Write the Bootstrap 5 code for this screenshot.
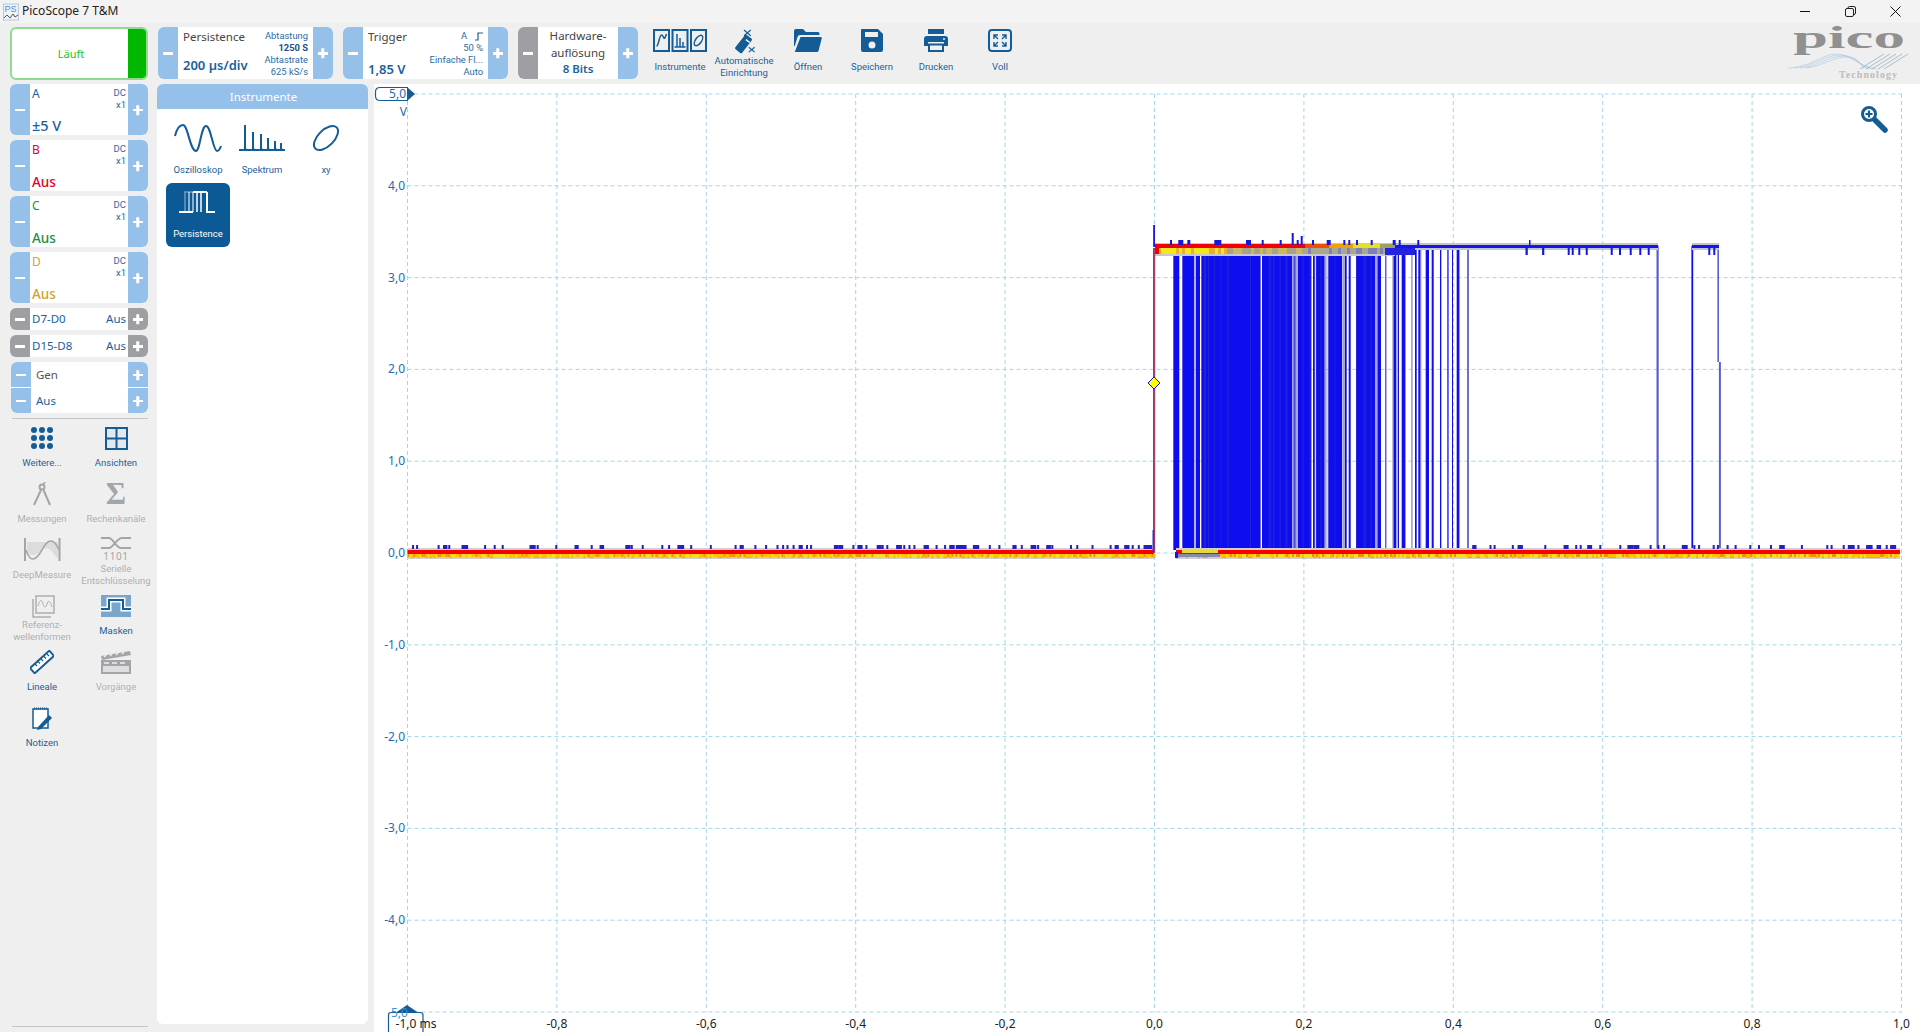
<!DOCTYPE html>
<html lang="de">
<head>
<meta charset="UTF-8">
<title>PicoScope 7 T&amp;M</title>
<link rel="stylesheet" href="https://cdn.jsdelivr.net/npm/bootstrap@5.3.0/dist/css/bootstrap.min.css">
<style>
html, body { height: 100%; overflow: hidden; }
body { background: #efefef; font-family: "Noto Sans", "Open Sans", sans-serif; color: #1b5f9c; font-size: 12px; line-height: 1.2; }
svg { display: block; }
.title-row { height: 23px; background: #f3f3f3; color: #222; font-size: 12px; }
.app-ico { margin: 0 3px 0 3px; }
.win-box { margin-right: 2px; }
.win-btn { width: 45px; height: 20px; }
.tool-row { height: 61px; padding-left: 10px; }
.run-box { width: 138px; height: 53px; margin-top: 4px; background: #fff; border: 2px solid #8fdc8f; border-radius: 6px; color: #22c222; font-size: 11px; overflow: hidden; }
.run-green { width: 20px; background: #00b800; margin: -2px; }
.stepper { height: 52px; margin-top: 4px; margin-left: 10px; border-radius: 6px; overflow: hidden; background: #fff; }
.stp { width: 20px; flex: none; padding: 0; border: 0; border-radius: 0; background: #94c0ea; position: relative; }
.stp.off { background: #9e9fa3; }
.stp::before, .stp.add::after { content: ""; position: absolute; left: 50%; top: 50%; width: 10px; height: 2.5px; margin: -1px 0 0 -5px; background: #fff; }
.stp.add::after { transform: rotate(90deg); }
.tb-wid { width: 135px; padding: 3px 5px 1px 5px; }
.tb-wid.narrow { width: 125px; }
.tb-name { font-size: 11.5px; color: #444; }
.tb-val { font-size: 13px; font-weight: 600; color: #1b5f9c; }
.tb-val.small-val { font-size: 11.5px; }
.tb-mini { font-family: Roboto, sans-serif; font-size: 9.4px; line-height: 12px; text-align: right; color: #2a6aa3; }
.tb-mini b { font-weight: 700; color: #174f86; }
.hw-mid { width: 80px; text-align: center; font-size: 11.5px; line-height: 16.5px; color: #444; padding-top: 1px; }
.tool-box { margin-left: 10px; }
.tool-btn { width: 64px; color: #1b5f9c; font-family: Roboto, sans-serif; font-size: 9.5px; line-height: 12px; text-align: center; }
.tool-ico { height: 25px; margin-top: 6px; }
.tool-lab { height: 25px; }
.logo-wrap { width: 124px; margin-right: 8px; }
.side-col { width: 157px; padding: 0 9px 0 10px; }
.chan { height: 51px; margin-bottom: 5px; border-radius: 6px; overflow: hidden; background: #fff; }
.chan-mid { padding: 3px 2px 1px 2px; min-width: 0; }
.chan-name { font-size: 12px; }
.chan-mini { font-family: Roboto, sans-serif; font-size: 9.5px; line-height: 12px; text-align: right; color: #2a6aa3; }
.chan-val { font-size: 13.5px; font-weight: 500; margin-top: auto; }
.chan-val.range { font-size: 14.5px; }
.col-b { color: #e4002b; }
.col-c { color: #1a9045; }
.col-d { color: #d3a32c; }
.dig { height: 22px; }
.dig .chan-mid { padding: 0 2px; font-size: 11.5px; }
.gen-box { height: 51px; margin: 0 0 5px 1px; border-radius: 6px; overflow: hidden; background: #fff; }
.gen-line { height: 25px; font-size: 11.5px; }
.gen-line + .gen-line { margin-top: 1px; }
.gen-txt { padding-left: 5px; }
.gen-name { color: #555; }
.side-rule { height: 1px; background: #c4c4c4; margin: 0 0 0 2px; flex: none; }
.side-rule.foot { margin-bottom: 5px; }
.side-tools { margin: 5px 0 0 -5px; width: 148px; }
.side-cell { height: 56px; font-family: Roboto, sans-serif; font-size: 9.5px; line-height: 12px; text-align: center; color: #1b5f9c; }
.side-cell.dim { color: #aeb0b3; }
.side-ico { height: 28px; }
.side-lab { height: 21px; }
.inst-panel { width: 211px; margin-bottom: 8px; margin-right: 6px; background: #fff; border-radius: 6px; overflow: hidden; }
.inst-head { height: 25px; background: #94c0ea; color: #fff; font-size: 11.5px; padding-left: 2px; }
.inst-grid { padding: 10px 9px; }
.inst-tile { width: 64px; height: 64px; font-family: Roboto, sans-serif; font-size: 9.5px; line-height: 12px; text-align: center; color: #1b5f9c; border-radius: 6px; }
.inst-tile.sel { background: #0b5a96; color: #fff; }
.inst-ico { height: 34px; margin-top: 4px; }
.inst-tile.sel .inst-ico { height: 30px; margin-top: 7px; }
.inst-lab { margin-top: 7px; }
.inst-tile.sel .inst-lab { margin-top: 8px; }
.chart-box { width: 1546px; background: #fff; }
.ylab { font: 12px "Noto Sans", sans-serif; fill: #1b6cb2; text-anchor: end; }
.xlab { font: 12px "Noto Sans", sans-serif; fill: #222; text-anchor: middle; }
</style>
</head>
<body class="d-flex flex-column">

<div class="title-row d-flex align-items-center flex-shrink-0">
  <svg class="app-ico" width="16" height="18" viewBox="0 0 16 18">
    <rect x="0.5" y="1" width="15" height="16" fill="#eef3f8" stroke="#b8c8d8"/>
    <text x="1.5" y="9" font-family="Liberation Sans" font-size="9" fill="#4c8fd0">PS</text>
    <path d="M1 15 L4 12 L7 15 L10 11 L12 14 L15 12" fill="none" stroke="#555" stroke-width="1"/>
  </svg>
  <span>PicoScope 7 T&amp;M</span>
  <div class="win-box ms-auto d-flex">
    <div class="win-btn d-flex align-items-center justify-content-center"><svg width="11" height="11"><path d="M0 5.5H10" stroke="#111"/></svg></div>
    <div class="win-btn d-flex align-items-center justify-content-center"><svg width="11" height="11"><rect x="0.5" y="2.5" width="8" height="8" rx="1.5" fill="none" stroke="#222"/><path d="M3 2.5V2a1.5 1.5 0 0 1 1.5-1.5H9A1.5 1.5 0 0 1 10.5 2v5A1.5 1.5 0 0 1 9 8.5" fill="none" stroke="#222"/></svg></div>
    <div class="win-btn d-flex align-items-center justify-content-center"><svg width="11" height="11"><path d="M0.5 0.5L10.5 10.5M10.5 0.5L0.5 10.5" stroke="#111"/></svg></div>
  </div>
</div>

<div class="tool-row d-flex flex-shrink-0">
  <div class="run-box d-flex">
    <div class="flex-fill d-flex align-items-center justify-content-center">Läuft</div>
    <div class="run-green"></div>
  </div>

  <div class="stepper d-flex">
    <button class="btn stp"></button>
    <div class="tb-wid d-flex justify-content-between">
      <div class="d-flex flex-column justify-content-between">
        <div class="tb-name">Persistence</div>
        <div class="tb-val pb-1">200 µs/div</div>
      </div>
      <div class="tb-mini">Abtastung<br><b>1250 S</b><br>Abtastrate<br>625 kS/s</div>
    </div>
    <button class="btn stp add"></button>
  </div>

  <div class="stepper d-flex">
    <button class="btn stp"></button>
    <div class="tb-wid narrow d-flex justify-content-between">
      <div class="d-flex flex-column justify-content-between">
        <div class="tb-name">Trigger</div>
        <div class="tb-val">1,85 V</div>
      </div>
      <div class="tb-mini">
        <div class="d-flex justify-content-end align-items-center gap-2">A <svg width="8" height="9" viewBox="0 0 8 9"><path d="M0 8H3V1H8" fill="none" stroke="#1b5f9c" stroke-width="1.2"/></svg></div>
        50 %<br>Einfache Fl...<br>Auto
      </div>
    </div>
    <button class="btn stp add"></button>
  </div>

  <div class="stepper d-flex">
    <button class="btn stp off"></button>
    <div class="hw-mid">Hardware-<br>auflösung<br><span class="tb-val small-val">8 Bits</span></div>
    <button class="btn stp add"></button>
  </div>

  <div class="tool-box d-flex">
    <div class="tool-btn">
      <div class="tool-ico d-flex align-items-start justify-content-center"><svg width="54" height="23" viewBox="0 0 54 23" fill="none" stroke="#135c96">
        <rect x="1" y="1" width="15" height="21" stroke-width="2"/><rect x="19.5" y="1" width="15" height="21" stroke-width="2"/><rect x="38" y="1" width="15" height="21" stroke-width="2"/>
        <path d="M3.5 17C6 17 6 6 8.5 6C11 6 10.5 14 13.5 5" stroke-width="1.5"/>
        <path d="M21.5 18H32.5M24 18V5M27 18V9M30 18V13" stroke-width="1.5"/>
        <ellipse cx="45.5" cy="11.5" rx="6" ry="3" transform="rotate(-55 45.5 11.5)" stroke-width="1.5"/>
      </svg></div>
      <div class="tool-lab d-flex align-items-center justify-content-center">Instrumente</div>
    </div>
    <div class="tool-btn">
      <div class="tool-ico d-flex align-items-start justify-content-center"><svg width="24" height="25" viewBox="0 0 24 26">
        <rect x="7" y="6" width="9" height="19" rx="1.5" transform="rotate(38 11.5 15.5)" fill="#135c96"/>
        <path d="M14 11L18 14" stroke="#fff" stroke-width="1.5"/>
        <path d="M12 1L19 7M19 1L12 7M17 19L23 24M23 19L17 24" stroke="#135c96" stroke-width="1.2"/>
      </svg></div>
      <div class="tool-lab d-flex align-items-center justify-content-center">Automatische<br>Einrichtung</div>
    </div>
    <div class="tool-btn">
      <div class="tool-ico d-flex align-items-start justify-content-center"><svg width="28" height="24" viewBox="0 0 28 24" fill="#135c96">
        <path d="M0 2Q0 0 2 0H9L12 3H24Q25.5 3 25.5 5V6H6Q4 6 3.5 8L0.8 17H0Z"/>
        <path d="M6.5 8H27Q28 8 27.7 9.5L24.5 22Q24 23 23 23H0.8Z"/>
      </svg></div>
      <div class="tool-lab d-flex align-items-center justify-content-center">Öffnen</div>
    </div>
    <div class="tool-btn">
      <div class="tool-ico d-flex align-items-start justify-content-center"><svg width="22" height="23" viewBox="0 0 22 23" fill="#135c96">
        <path fill-rule="evenodd" d="M1 0H17L22 5V21Q22 23 20 23H2Q0 23 0 21V1Q0 0 1 0ZM4 3V8H17V3ZM11 12.5A3.5 3.5 0 1 0 11 19.5A3.5 3.5 0 1 0 11 12.5Z"/>
      </svg></div>
      <div class="tool-lab d-flex align-items-center justify-content-center">Speichern</div>
    </div>
    <div class="tool-btn">
      <div class="tool-ico d-flex align-items-start justify-content-center"><svg width="24" height="23" viewBox="0 0 24 23" fill="#135c96">
        <rect x="4" y="0" width="16" height="5"/>
        <path fill-rule="evenodd" d="M3 7H21Q24 7 24 10V17H20V13H4V17H0V10Q0 7 3 7ZM20 9A1 1 0 1 0 20 11A1 1 0 1 0 20 9Z"/>
        <path fill-rule="evenodd" d="M4 14.5H20V23H4ZM6 16.5V21H18V16.5Z"/>
      </svg></div>
      <div class="tool-lab d-flex align-items-center justify-content-center">Drucken</div>
    </div>
    <div class="tool-btn">
      <div class="tool-ico d-flex align-items-start justify-content-center"><svg width="24" height="23" viewBox="0 0 24 23" fill="none" stroke="#135c96">
        <rect x="1" y="1" width="22" height="21" rx="3" stroke-width="2"/>
        <path d="M6 10V6H10M6 6L10 10M14 6H18V10M18 6L14 10M6 13V17H10M6 17L10 13M14 17H18V13M18 17L14 13" stroke-width="1.4"/>
      </svg></div>
      <div class="tool-lab d-flex align-items-center justify-content-center">Voll</div>
    </div>
  </div>

  <div class="logo-wrap ms-auto">
    <svg width="124" height="61" viewBox="0 0 124 61">
      <text x="5" y="25" font-family="Liberation Serif" font-size="31" font-weight="700" fill="#909090" textLength="112" lengthAdjust="spacingAndGlyphs">pico</text>
      <g fill="none" stroke="#a8c6e4" stroke-width=".6">
        <path d="M0 45C24 44 34 31 48 31C62 31 72 44 88 46"/><path d="M6 45C28 43 36 32 52 32C66 32 74 44 84 46"/><path d="M12 45C32 43 40 33 56 33C68 33 74 44 80 46"/><path d="M18 45C36 43 44 34 60 34C70 34 74 44 76 46"/>
      </g>
      <g fill="none" stroke="#7d97b3" stroke-width=".6">
        <path d="M72 46L96 31M78 46L102 31M84 46L108 31M90 46L114 31M96 46L120 31"/>
      </g>
      <text x="51" y="55" font-family="Liberation Serif" font-size="10" font-weight="700" fill="#bdbdbd" textLength="58">Technology</text>
    </svg>
  </div>
</div>

<div class="d-flex flex-fill" style="min-height:0">
  <div class="side-col d-flex flex-column flex-shrink-0">
    <div class="chan d-flex">
      <button class="btn stp"></button>
      <div class="chan-mid flex-fill d-flex flex-column">
        <div class="d-flex justify-content-between"><span class="chan-name">A</span><span class="chan-mini">DC<br>x1</span></div>
        <div class="chan-val range">±5 V</div>
      </div>
      <button class="btn stp add"></button>
    </div>
    <div class="chan d-flex">
      <button class="btn stp"></button>
      <div class="chan-mid flex-fill d-flex flex-column">
        <div class="d-flex justify-content-between"><span class="chan-name col-b">B</span><span class="chan-mini">DC<br>x1</span></div>
        <div class="chan-val col-b">Aus</div>
      </div>
      <button class="btn stp add"></button>
    </div>
    <div class="chan d-flex">
      <button class="btn stp"></button>
      <div class="chan-mid flex-fill d-flex flex-column">
        <div class="d-flex justify-content-between"><span class="chan-name col-c">C</span><span class="chan-mini">DC<br>x1</span></div>
        <div class="chan-val col-c">Aus</div>
      </div>
      <button class="btn stp add"></button>
    </div>
    <div class="chan d-flex">
      <button class="btn stp"></button>
      <div class="chan-mid flex-fill d-flex flex-column">
        <div class="d-flex justify-content-between"><span class="chan-name col-d">D</span><span class="chan-mini">DC<br>x1</span></div>
        <div class="chan-val col-d">Aus</div>
      </div>
      <button class="btn stp add"></button>
    </div>
    <div class="chan dig d-flex">
      <button class="btn stp off"></button>
      <div class="chan-mid flex-fill d-flex align-items-center justify-content-between"><span>D7-D0</span><span>Aus</span></div>
      <button class="btn stp off add"></button>
    </div>
    <div class="chan dig d-flex">
      <button class="btn stp off"></button>
      <div class="chan-mid flex-fill d-flex align-items-center justify-content-between"><span>D15-D8</span><span>Aus</span></div>
      <button class="btn stp off add"></button>
    </div>
    <div class="gen-box">
      <div class="gen-line d-flex"><button class="btn stp"></button><div class="gen-txt gen-name flex-fill d-flex align-items-center">Gen</div><button class="btn stp add"></button></div>
      <div class="gen-line d-flex"><button class="btn stp"></button><div class="gen-txt flex-fill d-flex align-items-center">Aus</div><button class="btn stp add"></button></div>
    </div>
    <div class="side-rule"></div>

    <div class="side-tools row g-0">
      <div class="col-6 side-cell">
        <div class="side-ico d-flex align-items-center justify-content-center"><svg width="24" height="24" viewBox="0 0 24 24" fill="#135c96">
          <circle cx="4" cy="4" r="3"/><circle cx="12" cy="4" r="3"/><circle cx="20" cy="4" r="3"/><circle cx="4" cy="12" r="3"/><circle cx="12" cy="12" r="3"/><circle cx="20" cy="12" r="3"/><circle cx="4" cy="20" r="3"/><circle cx="12" cy="20" r="3"/><circle cx="20" cy="20" r="3"/>
        </svg></div>
        <div class="side-lab d-flex align-items-center justify-content-center">Weitere...</div>
      </div>
      <div class="col-6 side-cell">
        <div class="side-ico d-flex align-items-center justify-content-center"><svg width="23" height="23" viewBox="0 0 23 23" fill="none" stroke="#135c96" stroke-width="2"><rect x="1" y="1" width="21" height="21" fill="#e4e8ec"/><path d="M11.5 1V22M1 11.5H22"/></svg></div>
        <div class="side-lab d-flex align-items-center justify-content-center">Ansichten</div>
      </div>
      <div class="col-6 side-cell dim">
        <div class="side-ico d-flex align-items-center justify-content-center"><svg width="20" height="24" viewBox="0 0 20 24" fill="none" stroke="#a4a5a8" stroke-width="2"><circle cx="10" cy="5" r="2.5"/><path d="M9 8L2 23M11.5 8L18 23"/><path d="M13 0L11 3" stroke-width="1.5"/></svg></div>
        <div class="side-lab d-flex align-items-center justify-content-center">Messungen</div>
      </div>
      <div class="col-6 side-cell dim">
        <div class="side-ico d-flex align-items-center justify-content-center"><svg width="22" height="26" viewBox="0 0 22 26"><text x="11" y="23" text-anchor="middle" font-family="Liberation Serif" font-size="31" font-weight="700" fill="#a4a5a8">Σ</text></svg></div>
        <div class="side-lab d-flex align-items-center justify-content-center">Rechenkanäle</div>
      </div>
      <div class="col-6 side-cell dim">
        <div class="side-ico d-flex align-items-center justify-content-center"><svg width="37" height="24" viewBox="0 0 37 24" fill="none" stroke="#a4a5a8">
          <path d="M3 4H34V20C30 20 28 6 18 12C12 18 6 20 3 12Z" fill="#dcdcdc" stroke="none"/>
          <path d="M1 0V23M35.5 0V23" stroke-width="2"/>
          <path d="M2 12C6 24 11 24 18 12C24 0 30 0 35 12" stroke-width="1.5"/>
        </svg></div>
        <div class="side-lab d-flex align-items-center justify-content-center">DeepMeasure</div>
      </div>
      <div class="col-6 side-cell dim">
        <div class="side-ico d-flex align-items-start justify-content-center"><svg width="30" height="25" viewBox="0 0 30 25" fill="none" stroke="#a4a5a8" stroke-width="2">
          <path d="M0 2H8C12 2 15 12 20 12H30M0 12H8C12 12 16 2 21 2H30" />
          <text x="15" y="24" text-anchor="middle" font-family="Noto Sans" font-size="10" fill="#a4a5a8" stroke="none" letter-spacing=".6">1101</text>
        </svg></div>
        <div class="side-lab d-flex align-items-center justify-content-center">Serielle<br>Entschlüsselung</div>
      </div>
      <div class="col-6 side-cell dim">
        <div class="side-ico d-flex align-items-center justify-content-center"><svg width="25" height="23" viewBox="0 0 25 23" fill="none" stroke="#aeaeb0" stroke-width="1.5">
          <path d="M3 4V22H21"/><rect x="6" y="1" width="18" height="17" fill="#efefef"/><path d="M8 11C10 4 12 4 13 9C14 13 16 13 17 9C18 5 20 5 22 12" stroke-width="1"/>
        </svg></div>
        <div class="side-lab d-flex align-items-center justify-content-center">Referenz-<br>wellenformen</div>
      </div>
      <div class="col-6 side-cell">
        <div class="side-ico d-flex align-items-center justify-content-center"><svg width="30" height="22" viewBox="0 0 30 22">
          <rect width="30" height="22" fill="#7aa6cc"/>
          <path d="M0 14H8V5H22V14H30" fill="none" stroke="#fff" stroke-width="5"/>
          <path d="M0 14H8V5H22V14H30" fill="none" stroke="#135c96" stroke-width="2"/>
        </svg></div>
        <div class="side-lab d-flex align-items-center justify-content-center">Masken</div>
      </div>
      <div class="col-6 side-cell">
        <div class="side-ico d-flex align-items-center justify-content-center"><svg width="24" height="24" viewBox="0 0 24 24">
          <rect x="-1" y="8.5" width="26" height="7" transform="rotate(-42 12 12)" fill="#fff" stroke="#135c96" stroke-width="2"/>
          <path d="M5 14L7 16M8 11.5L10 13.5M11 9L13 11M14 6.5L16 8.5M17 4L19 6" stroke="#135c96" stroke-width="1.2"/>
        </svg></div>
        <div class="side-lab d-flex align-items-center justify-content-center">Lineale</div>
      </div>
      <div class="col-6 side-cell dim">
        <div class="side-ico d-flex align-items-center justify-content-center"><svg width="30" height="23" viewBox="0 0 30 23" fill="#a4a5a8">
          <path d="M0 5L29 0L30 4L1 9Z"/><path d="M0 9H30V23H0Z"/><path d="M3 6L5 4M9 5L11 3M15 4L17 2M21 3L23 1" stroke="#efefef" stroke-width="1.5"/><path d="M3 12H8M11 12H16M19 12H24" stroke="#efefef" stroke-width="1.5"/>
          <rect x="2" y="15" width="26" height="6" fill="#dedede"/>
        </svg></div>
        <div class="side-lab d-flex align-items-center justify-content-center">Vorgänge</div>
      </div>
      <div class="col-6 side-cell">
        <div class="side-ico d-flex align-items-center justify-content-center"><svg width="20" height="23" viewBox="0 0 20 23">
          <rect x="1" y="2" width="15" height="19" fill="#fff" stroke="#135c96" stroke-width="1.5"/>
          <path d="M2 1.5H16" stroke="#135c96" stroke-width="2" stroke-dasharray="1 1"/>
          <path d="M6 20L17 8L20 11L9 22L5 23Z" fill="#135c96"/>
        </svg></div>
        <div class="side-lab d-flex align-items-center justify-content-center">Notizen</div>
      </div>
    </div>

    <div class="side-rule foot mt-auto"></div>
  </div>

  <div class="inst-panel flex-shrink-0">
    <div class="inst-head d-flex align-items-center justify-content-center">Instrumente</div>
    <div class="inst-grid d-flex flex-wrap">
      <div class="inst-tile">
        <div class="inst-ico d-flex justify-content-center"><svg width="48" height="30" viewBox="0 0 48 30" fill="none" stroke="#135c96" stroke-width="2"><path d="M1 13C3 5 6 2 9 2C14 2 16 28 22 28C26 28 27 3 32 3C37 3 39 28 43 28C45 28 46 26 47 23"/></svg></div>
        <div class="inst-lab">Oszilloskop</div>
      </div>
      <div class="inst-tile">
        <div class="inst-ico d-flex justify-content-center"><svg width="48" height="30" viewBox="0 0 48 30" fill="none" stroke="#135c96" stroke-width="2"><path d="M1 27H47M6 27Q7 27 7 24V2V24Q7 27 9 27"/><path d="M14 27Q15 27 15 24V9V24Q15 27 17 27M22 27Q23 27 23 24V11V24Q23 27 25 27M29 27Q30 27 30 24V15V24Q30 27 32 27M36 27Q37 27 37 24V18V24Q37 27 39 27M42 27Q43 27 43 25V20V25Q43 27 45 27"/></svg></div>
        <div class="inst-lab">Spektrum</div>
      </div>
      <div class="inst-tile">
        <div class="inst-ico d-flex justify-content-center"><svg width="30" height="30" viewBox="0 0 30 30" fill="none" stroke="#135c96" stroke-width="2"><ellipse cx="15" cy="15" rx="15" ry="8" transform="rotate(-45 15 15)"/></svg></div>
        <div class="inst-lab">xy</div>
      </div>
      <div class="inst-tile sel">
        <div class="inst-ico d-flex justify-content-center"><svg width="38" height="25" viewBox="0 0 38 25" fill="none" stroke="#fff" stroke-width="2">
          <path d="M0 22H14M28 2V22H36M14 2H28" />
          <path d="M22 2V22M18 2V22" stroke-width="1.5"/><path d="M14 2V22M10 2V22" stroke-width="1.5" opacity=".7"/><path d="M6 2V22M14 2H5" stroke-width="1.5" opacity=".4"/>
        </svg></div>
        <div class="inst-lab">Persistence</div>
      </div>
    </div>
  </div>

  <div class="chart-box flex-shrink-0">
    <svg id="scope" width="1546" height="948" viewBox="374 84 1546 948">
      <defs><filter id="soft" x="0" y="0" width="1" height="1"><feGaussianBlur stdDeviation="0.6"/></filter></defs>
      <g id="grid" stroke="#a3d7e6" stroke-dasharray="4 3" fill="none"></g>
      <g id="wave" filter="url(#soft)"></g>
      <g id="labels"></g>
      <path d="M1154 377L1160 383L1154 389L1148 383Z" fill="#ffff00" stroke="#1414e0"/>
      <path d="M408 87.5H380Q375.5 87.5 375.5 92V96Q375.5 100.5 380 100.5H408" fill="#fff" stroke="#135c96" stroke-width="1.2"/>
      <path d="M407 87L415 94L407 101Z" fill="#135c96"/>
      <text class="ylab" x="406" y="98">5,0</text>
      <text class="ylab" x="407" y="116">V</text>
      <path d="M423 1032V1015Q423 1012.5 420 1012.5H391Q388.5 1012.5 388.5 1015V1032" fill="none" stroke="#135c96" stroke-width="1.2"/>
      <path d="M407 1005L418 1012.5H396Z" fill="#135c96"/>
      <text x="391" y="1017" font-family="Noto Sans" font-size="12" fill="#3f8fcf">5,0</text>
      <text class="xlab" x="416" y="1028">-1,0 ms</text>
      <g fill="none" transform="translate(1861 106)">
        <path d="M14 14L24 24" stroke="#135c96" stroke-width="5.5" stroke-linecap="round"/>
        <circle cx="8" cy="8" r="6.5" fill="#fff" stroke="#135c96" stroke-width="3"/>
        <path d="M4.5 8H11.5M8 4.5V11.5" stroke="#135c96" stroke-width="2.2"/>
      </g>
    </svg>
  </div>
</div>

<script src="https://cdn.jsdelivr.net/npm/bootstrap@5.3.0/dist/js/bootstrap.bundle.min.js"></script>
<script>
    // seeded random so the trace looks the same on every load
    let seed = 12345;
    function rnd() {
        seed = (seed * 1664525 + 1013904223) % 4294967296;
        return seed / 4294967296;
    }

    const X0 = 407.5, XSTEP = 149.4, Y0 = 94, YSTEP = 91.8;
    const xAt = z => 1130 + z / 3;

    function rect(x, y, w, h, c) {
        return `<rect x="${x.toFixed(1)}" y="${y}" width="${w.toFixed(1)}" height="${h}" fill="${c}"/>`;
    }

    // grid and axis labels
    let g = "", lab = "";
    for (let i = 0; i <= 10; i++) {
        const x = X0 + i * XSTEP, y = Y0 + i * YSTEP;
        g += `<path d="M${x.toFixed(1)} ${Y0}V${Y0 + 10 * YSTEP}"/><path d="M${X0} ${y.toFixed(1)}H${X0 + 10 * XSTEP}"/>`;
        const v = (5 - i).toFixed(1).replace(".", ",");
        if (i > 0 && i < 10) lab += `<text class="ylab" x="405" y="${(y + 4).toFixed(1)}">${v}</text>`;
        const t = (-1 + i / 5).toFixed(1).replace(".", ",").replace("-0,0", "0,0");
        if (i > 0) lab += `<text class="xlab" x="${x.toFixed(1)}" y="1028">${t}</text>`;
    }
    document.getElementById("grid").innerHTML = g;
    document.getElementById("labels").innerHTML = lab;

    let w = "";

    // dense edges between the two rails
    const blue = [[130,148],[157,193],[197,210],[214,392],[396,487],[503,544],[549,553],[558,584],[597,636],[645,650],[656,662],[680,735],[742,753],[766,769],[790,798],[803,807],[815,826],[855,860],[865,872],[887,897],[905,911],[930,934],[952,956],[966,969],[980,988]];
    blue.forEach(b => { w += rect(xAt(b[0]), 247, (b[1] - b[0]) / 3, 303, "#0c0cf0"); });
    [[487,492],[497,503],[584,590],[637,645],[735,742],[787,790],[798,801],[843,848],[872,874]].forEach(b => {
        w += rect(xAt(b[0]), 247, (b[1] - b[0]) / 3, 303, "#a6a6c8");
    });
    w += rect(xAt(1011), 247, 2, 303, "#7070c4");
    for (let i = 0; i < 28; i++) {
        w += rect(xAt(214 + rnd() * 510), 250, 1, 300, "#2626d8");
    }
    // the later single edges
    w += rect(1656.5, 246, 2.2, 304, "#5c5cd0");
    w += rect(1691.4, 246, 1.8, 304, "#1010f4");
    w += rect(1717.4, 250, 1.6, 112, "#5c5cd0");
    w += rect(1718.9, 362, 2, 190, "#5c5cd0");

    // top rail
    w += rect(1155, 243, 240, 13, "#c8c8cc");
    w += rect(1395, 243, 263, 7, "#c4c4d0");
    w += rect(1692, 243, 27, 7, "#c4c4d0");
    w += rect(1395, 245, 263, 3, "#1414e8");
    w += rect(1692, 245, 27, 3, "#1414e8");
    for (let x = 1155; x < 1395; x += 3) {
        const k = (x - 1155) / 240;
        const c = k < 0.62 ? "#f40000" : k < 0.72 ? "#f05000" : k < 0.82 ? "#f0a000" : k < 0.93 ? "#e8e020" : "#a0a060";
        w += rect(x, 244, 3, 4, c);
        const s = rnd();
        let low;
        if (x < 1225) low = s < 0.7 ? "#f4e81c" : "#e8b030";
        else if (x < 1300) low = s < 0.5 ? "#c8b860" : "#a8a088";
        else low = s < 0.5 ? "#8080b8" : "#a8a890";
        w += rect(x, 248, 3, 6, low);
    }
    w += rect(1155, 245, 4, 9, "#f40000");
    w += rect(1385, 248, 30, 7, "#2020e0");
    [1187,1237].forEach(z => { w += rect(xAt(z), 248, 1.5, 7, "#1414e0"); });
    [77,127,203,215,235,257,332,357,389,418,443,625,640].forEach(z => { w += rect(1500 + z / 3, 248, 2, 7, "#1414e0"); });
    w += rect(1529, 240, 1.5, 5, "#1414e0");
    [[120,2],[145,5],[172,3],[253,7],[348,5],[395,2],[449,2],[500,2],[546,2],[590,4],[640,2],[655,2],[678,2],[722,2],[788,3],[806,2],[862,2]].forEach(t => {
        w += rect(xAt(t[0]), 240, t[1], 5, "#1818d8");
    });
    w += rect(xAt(485), 233, 2, 12, "#1414e0");
    w += rect(xAt(512), 236, 2, 9, "#1414e0");

    // bottom rail
    function rail(a, b) {
        w += rect(a, 548, b - a, 11, "#cfcfcf");
        w += rect(a, 550, b - a, 4, "#f60000");
        for (let x = a; x < b; x += 2) {
            const s = rnd();
            const c = s < 0.45 ? "#ffc000" : s < 0.8 ? "#f4e020" : "#f09000";
            w += rect(x, 554, 2, 3, c);
            if (s < 0.3) w += rect(x, 557, 2, 1, "#b4b480");
        }
    }
    rail(407.5, 1154);
    rail(1176, 1900);
    // faint glow just after the last low edge
    w += rect(1182, 550, 36, 3, "#e8d830");
    w += rect(1176, 554, 44, 3, "#8888b0");
    w += rect(1175, 552, 3, 6, "#1414e0");

    // small hits above the low rail
    let x = 412;
    while (x < 1895) {
        const wd = rnd() < 0.25 ? 4 + rnd() * 3 : 2;
        if (x < 1150 || x > 1460) w += rect(x, 545, wd, 4, "#2020c0");
        x += 4 + rnd() * rnd() * 26;
    }

    // trigger edge
    w += rect(1153, 248, 2.2, 305, "#a83a68");
    w += rect(1153.2, 225, 1.8, 22, "#1414f0");
    w += rect(1152.5, 530, 1.6, 22, "#3030d0");

    document.getElementById("wave").innerHTML = w;
</script>
</body>
</html>
